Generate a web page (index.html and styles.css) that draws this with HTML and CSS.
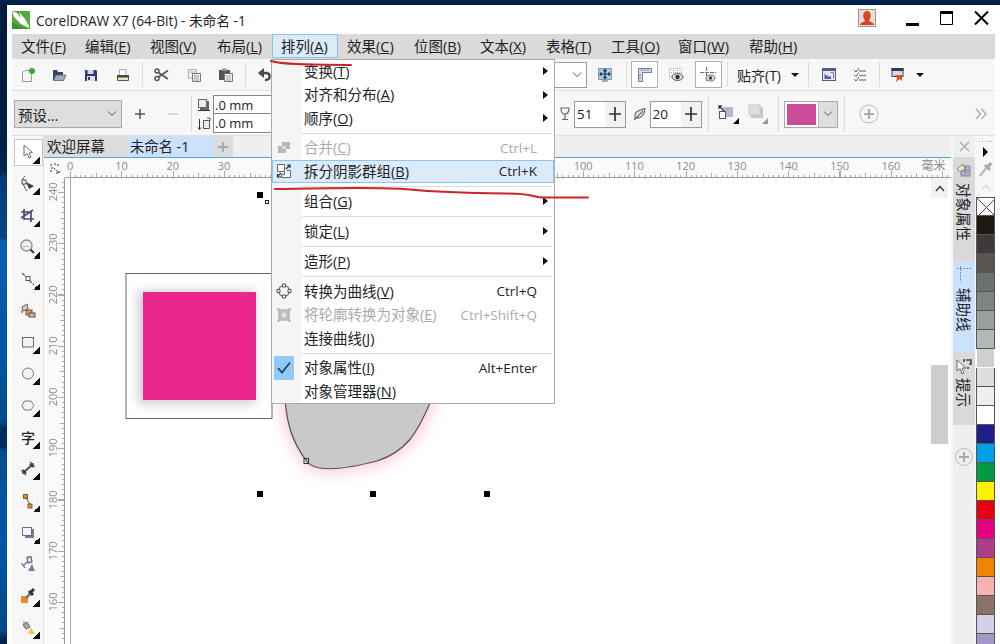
FILE: index.html
```html
<!DOCTYPE html>
<html lang="zh-CN">
<head>
<meta charset="utf-8">
<title>CorelDRAW X7</title>
<link rel="stylesheet" href="styles.css">
</head>
<body>
<div class="window">
  <header class="titlebar">
    <svg class="logo" width="18" height="18" viewBox="0 0 18 18"><rect width="18" height="18" fill="#58a83e"/><path d="M0 0L5 2 9 7 7 1 13 8 17 15 17 17 9 13 2 6Z" fill="#fff"/><path d="M0 11Q8 17 15 17L16 18H0Z" fill="#3f8d35"/></svg>
    <span class="title">CorelDRAW X7 (64-Bit) - 未命名 -1</span>
    <svg width="18" height="18" viewBox="0 0 18 18"><rect x=".5" y=".5" width="17" height="17" fill="#e6ddd8" stroke="#999"/><path d="M2 16C2 13 7 13 7 11.500C4 8 5 2 9 2S14 8 11 11.500C11 13 16 13 16 16Z" fill="#d6451b"/></svg>
    <svg class="min" width="14" height="14"><path d="M0 11.500H13" stroke="#000" stroke-width="3"/></svg>
    <svg class="max" width="14" height="14"><path d="M.5 1V13.500H12.500V1" stroke="#000" fill="none"/><path d="M0 1.500H13" stroke="#000" stroke-width="3"/></svg>
    <svg class="close" width="15" height="14"><path d="M1 .5L14 13.500M14 .5L1 13.500" stroke="#000" stroke-width="2"/></svg>
  </header>

  <nav class="menubar">
    <span>文件(<u>F</u>)</span><span>编辑(<u>E</u>)</span><span>视图(<u>V</u>)</span><span>布局(<u>L</u>)</span><span class="open">排列(<u>A</u>)</span><span>效果(<u>C</u>)</span><span>位图(<u>B</u>)</span><span>文本(<u>X</u>)</span><span>表格(<u>T</u>)</span><span>工具(<u>O</u>)</span><span>窗口(<u>W</u>)</span><span>帮助(<u>H</u>)</span>
  </nav>

  <div class="toolbar">
    <svg width="16" height="16"><path d="M2.500 14.500V5L5.500 3.500H11.500V14.500Z" fill="#f4f4f4" stroke="#999"/><circle cx="12" cy="4" r="3" fill="#3aa635"/></svg>
    <svg width="16" height="16"><path d="M2 3H6L7 5H12V8H5L3 13H2Z" fill="#3c4663"/><path d="M5 8H15L12.500 13.500H2.500Z" fill="#a5abb8" stroke="#444d66" stroke-width=".7"/></svg>
    <svg width="16" height="16"><path d="M2 3H13L14 4V14H2Z" fill="#34396f"/><rect x="4.500" y="3" width="6" height="4" fill="#cfd3e2"/><rect x="4" y="9" width="8" height="5" fill="#dfe1ea"/><path d="M6 10V13" stroke="#34396f" stroke-width="2"/></svg>
    <svg width="16" height="16"><path d="M4.500 8V2.500H11V8" fill="#fff" stroke="#aaa"/><path d="M2.500 8.500H13.500V13.500H2.500Z" fill="#e9e5bf" stroke="#555"/><path d="M2 9.500H14" stroke="#444" stroke-width="2"/></svg>
    <i class="sep"></i>
    <svg width="18" height="16"><circle cx="4" cy="4" r="2" fill="none" stroke="#555" stroke-width="1.400"/><circle cx="4" cy="11.500" r="2" fill="none" stroke="#555" stroke-width="1.400"/><path d="M5.500 5.500L15 12M5.500 10L15 3.500" stroke="#555" stroke-width="1.700"/></svg>
    <svg width="16" height="16"><path d="M2.500 2.500H10.500V11H2.500Z" fill="#f6f6f6" stroke="#aaa"/><path d="M6.500 6.500H14.500V14.500H6.500Z" fill="#eee" stroke="#777"/><path d="M4 5H9M8 9H13M8 11H13M8 13H13" stroke="#8290a5" stroke-width=".8"/></svg>
    <svg width="16" height="16"><path d="M1 3H12V13H1Z" fill="#57534f"/><path d="M4 1.500H9V4H4Z" fill="#999"/><path d="M6.500 6.500H14.500V14.500H6.500Z" fill="#eee" stroke="#777"/><path d="M8 9H13M8 11H13M8 13H13" stroke="#999" stroke-width=".8"/></svg>
    <i class="sep"></i>
    <svg width="18" height="16"><path d="M3 6H10C15 6 15 13 9 13" fill="none" stroke="#46484c" stroke-width="2.400"/><path d="M2 6L8 1V11Z" fill="#46484c"/></svg>
    <i></i>
    <div class="zoom-combo"><svg width="10" height="6"><path d="M1 .5L5 4.500 9 .5" fill="none" stroke="#555"/></svg></div>
    <svg width="16" height="16"><path d="M1.500 1.500H14.500V12.500H1.500Z" fill="#a9cce0" stroke="#8095a8"/><path d="M5 14H11" stroke="#8095a8" stroke-width="1.500"/><path d="M8 3V11M3.500 7H12.500M6.500 4L8 2.500 9.500 4M6.500 10L8 11.500 9.500 10M4.500 5.500L3 7 4.500 8.500M11.500 5.500L13 7 11.500 8.500" fill="none" stroke="#142f4c" stroke-width="1.200"/></svg>
    <i class="sep"></i>
    <div class="toggle"><svg width="16" height="16"><path d="M1.500 1.500H14.500V5.500H5.500V14.500H1.500Z" fill="#d7dbea" stroke="#747e9a"/><path d="M5 2V4M8 2V4M11 2V4M2 8H4M2 11H4" stroke="#747e9a"/></svg></div>
    <svg width="18" height="18"><path d="M2 2.500H15M2 6.500H15M2 10.500H8M2.500 2V14M6.500 2V14M10.500 2V7M14.500 2V7" stroke="#aaa" stroke-dasharray="1 1"/><ellipse cx="10.500" cy="11" rx="5.500" ry="3.500" fill="#ddd" stroke="#555"/><circle cx="10.500" cy="11" r="2.200" fill="#333"/></svg>
    <div class="toggle"><svg width="18" height="18"><path d="M7.500 1V16M1 6.500H17" stroke="#68708b" stroke-dasharray="4 1"/><ellipse cx="11.500" cy="12" rx="4.500" ry="3" fill="#ddd" stroke="#777"/><circle cx="11.500" cy="12" r="1.800" fill="#444"/></svg></div>
    <i class="sep"></i>
    <span class="snap">贴齐(T)</span>
    <b class="drop"></b>
    <i class="sep"></i>
    <svg width="16" height="16"><rect x="1.500" y="1.500" width="13" height="12" fill="#e5e7f3" stroke="#555a8b"/><path d="M1 3H15" stroke="#555a8b" stroke-width="2"/><path d="M3.500 6V12H10V9L8 10 6 8 5 9Z" fill="#555aa3"/><path d="M9.500 5.500H12.500V11.500" fill="none" stroke="#777cac"/></svg>
    <svg width="16" height="16"><path d="M7 4H14M7 8.500H14M7 13H14" stroke="#889488" stroke-width="1.300"/><path d="M2 3L4 5 7 1M2 7.500L4 9.500 7 5.500M2 12L4 14 7 10" fill="none" stroke="#4d6b4d"/></svg>
    <i class="sep"></i>
    <svg width="16" height="18"><rect x="2" y="2.500" width="11" height="8" fill="#d8dae5" stroke="#3e4462"/><path d="M1.500 3.500H13.500" stroke="#2f3554" stroke-width="3"/><path d="M5 9H12V15L9.500 13 6 16 7 12Z" fill="#df5027"/></svg>
    <b class="drop"></b>
  </div>

  <div class="propbar">
    <div class="preset"><span>预设...</span><svg width="10" height="6"><path d="M1 .5L5 4.500 9 .5" fill="none" stroke="#555"/></svg></div>
    <svg width="12" height="12"><path d="M6 1V11M1 6H11" stroke="#555" stroke-width="1.500"/></svg>
    <svg width="12" height="12"><path d="M1 6H11" stroke="#ccc" stroke-width="1.500"/></svg>
    <i class="sep tall"></i>
    <div class="offset-icons">
      <svg width="14" height="14"><rect x="3" y="3" width="9" height="9" fill="#666"/><rect x="1.500" y="1.500" width="8" height="8" fill="#e8eaf0" stroke="#666"/><path d="M1 12.500H13" stroke="#333"/></svg>
      <svg width="14" height="14"><path d="M2.500 2V12M1 10.500L2.500 12.500 4 10.500" fill="none" stroke="#333"/><path d="M6.500 3.500H12.500V11.500H6.500Z" fill="#eee" stroke="#555"/><path d="M10 1H13V4" stroke="#555" fill="none"/></svg>
    </div>
    <div class="offsets"><span>.0 mm</span><span>.0 mm</span></div>
    <i></i>
    <svg width="12" height="16"><path d="M2 2H10C10 6 9 8 6 8S2 6 2 2ZM6 8V13M3 13.500H9" fill="none" stroke="#666" stroke-width="1.200"/></svg>
    <div class="spin"><span>51</span><b><svg width="14" height="16"><path d="M7 1V15M1 8H13" stroke="#333" stroke-width="1.700"/></svg></b></div>
    <svg class="leaf" width="14" height="16"><path d="M2 12C1 5 7 4 12 2.500C12 8 8 13 3 12ZM1 14L10 5" fill="#eee" stroke="#666" stroke-width="1.100"/></svg>
    <div class="spin"><span>20</span><b><svg width="14" height="16"><path d="M7 1V15M1 8H13" stroke="#333" stroke-width="1.700"/></svg></b></div>
    <i class="sep tall"></i>
    <svg width="24" height="22"><rect x="7" y="4" width="10" height="10" fill="#b4b7d0"/><rect x="3.500" y="8.500" width="6" height="7" fill="#fff" stroke="#555"/><path d="M3 3L8 8M3 6V3H6" stroke="#333" fill="none" stroke-width="1.300"/><path d="M23 15V21H17Z"/></svg>
    <svg width="24" height="22"><rect x="5" y="4" width="12" height="11" fill="#c8c8c8"/><rect x="3" y="2" width="11" height="10" fill="#e0e0e0" stroke="#c8c8c8"/><path d="M22 15V21H16Z" fill="#999"/></svg>
    <i class="sep tall"></i>
    <div class="color-pick"><span></span><b><svg width="10" height="6"><path d="M1 .5L5 4.500 9 .5" fill="none" stroke="#555"/></svg></b></div>
    <i class="sep tall"></i>
    <svg width="20" height="20"><circle cx="10" cy="10" r="9" fill="none" stroke="#bbb"/><path d="M10 5V15M5 10H15" stroke="#aaa" stroke-width="2.200"/></svg>
    <svg class="more" width="12" height="12"><path d="M1 1L5.500 6 1 11M6.500 1L11 6 6.500 11" fill="none" stroke="#aaa" stroke-width="1.400"/></svg>
  </div>

  <main class="workspace">
    <aside class="toolbox">
      <div class="tool picked"><svg width="18" height="18"><path d="M5 2V13L8 10.500 10 15 12 14 10 10 13.500 9.500Z" fill="#fff" stroke="#666a7a"/></svg></div>
      <div class="tool"><svg width="18" height="18"><path d="M6 1C2 4 4 11 8 16" fill="none" stroke="#555"/><rect x="3" y="5" width="4" height="4" fill="#eee" stroke="#555"/><path d="M7 7L15 11 10 14Z" fill="#353b55"/></svg></div>
      <div class="tool"><svg width="18" height="18"><path d="M5 2V12H15M2 5H12V15M2 11L14 3" fill="none" stroke="#494b70" stroke-width="1.700"/></svg></div>
      <div class="tool"><svg width="18" height="18"><circle cx="7.500" cy="7.500" r="5.500" fill="#eef0f2" stroke="#888" stroke-width="1.300"/><path d="M4 8.500H11" stroke="#bbc"/><path d="M11.500 11.500L15 15" stroke="#444" stroke-width="2.400"/></svg></div>
      <div class="tool"><svg width="18" height="18"><path d="M3 3L15 15" stroke="#666" stroke-width="1.300" stroke-dasharray="4 1"/><rect x="7" y="6.500" width="4" height="4" fill="#fff" stroke="#555"/></svg></div>
      <div class="tool plain"><svg width="18" height="18"><path d="M3 5L8 2 9 7 4 9Z" fill="#d7cfc6" stroke="#675b55"/><rect x="7" y="8" width="6" height="5" fill="#e39a55" stroke="#555"/><rect x="10" y="11" width="6" height="4" fill="#e9b075" stroke="#555"/><path d="M3 8V11" stroke="#e08b22" stroke-width="2"/></svg></div>
      <div class="tool"><svg width="18" height="18"><rect x="3.500" y="4.500" width="11" height="9.500" fill="#f2f3f4" stroke="#66686f"/></svg></div>
      <div class="tool"><svg width="18" height="18"><circle cx="9" cy="8.500" r="5.500" fill="#f0f2f4" stroke="#777"/></svg></div>
      <div class="tool"><svg width="18" height="18"><path d="M5.500 4H12L15 8.500 12 13H5.500L3 8.500Z" fill="#f0f2f4" stroke="#777"/></svg></div>
      <div class="tool"><span class="glyph">字</span></div>
      <div class="tool"><svg width="18" height="18"><path d="M4 13L14 4" stroke="#444" stroke-width="1.700"/><path d="M2.500 10L7 15M11 2L15.500 7" stroke="#444" stroke-width="1.300"/><path d="M3 14L4.500 9 8 13ZM15 3L10 4.500 13.500 8Z" fill="#444"/></svg></div>
      <div class="tool"><svg width="18" height="18"><path d="M6 4L12 14" stroke="#555"/><rect x="4.500" y="2.500" width="4" height="4" fill="#dd8a2f" stroke="#855c32"/><rect x="9" y="12" width="4" height="4" fill="#dd8a2f" stroke="#855c32"/></svg></div>
      <div class="tool"><svg width="18" height="18"><path d="M6 5H15V14H6Z" fill="#777b92"/><path d="M3.500 3.500H12.500V11.500H3.500Z" fill="#f6f6fa" stroke="#666a80"/></svg></div>
      <div class="tool plain"><svg width="18" height="18"><path d="M8 2.500L12 1.500 13 7 9 8ZM8 7L4 11M2.500 8L6 13" fill="#e8e8ee" stroke="#666b82" stroke-width="1.300"/><path d="M9 16L13 9 16 16Z" fill="#777c98"/></svg></div>
      <div class="tool"><svg width="18" height="18"><rect x="2" y="9" width="7" height="7" fill="#ed8b20"/><path d="M7 11L13 5" stroke="#777" stroke-width="2.500"/><path d="M10 4L14 8M12 5L15 2" stroke="#333" stroke-width="3"/></svg></div>
      <div class="tool"><svg width="18" height="18"><path d="M4 6L8 3 11 8 7 10Z" fill="#aaa" stroke="#666"/><path d="M5 2V6" stroke="#777"/><path d="M9 15L12 9 16 15Z" fill="#f3c143"/></svg></div>
    </aside>

    <section class="document">
      <div class="tabs"><span class="tab">欢迎屏幕</span><span class="tab active">未命名 -1</span><span class="tab add"><svg width="12" height="12"><path d="M6 1V11M1 6H11" stroke="#aaa" stroke-width="2"/></svg></span></div>
      <div class="sheet">
        <div class="corner"><svg width="12" height="12"><path d="M1 3H4M6 1V4M8 3H11M3 5V8M5 6L10 11M7 11H10V8M1 9H3" stroke="#333" fill="none" stroke-dasharray="2 1"/></svg></div>
        <div class="hruler"><div class="hlabels"><span>0</span><span>10</span><span>20</span><span>30</span><i></i><span>100</span><span>110</span><span>120</span><span>130</span><span>140</span><span>150</span><span>160</span></div><span class="unit">毫米</span></div>
        <div class="vruler"><span>240</span><span>230</span><span>220</span><span>210</span><span>200</span><span>190</span><span>180</span><span>170</span><span>160</span></div>
        <div class="canvas">
          <svg class="art" width="866" height="466" viewBox="65 178 866 466">
            <defs>
              <filter id="soft" x="-20%" y="-20%" width="140%" height="140%"><feGaussianBlur stdDeviation="5.500"/></filter>
              <filter id="glow" x="-20%" y="-20%" width="140%" height="140%"><feGaussianBlur stdDeviation="7"/></filter>
            </defs>
            <path d="M70.500 178V644" stroke="#aaa"/>
            <rect x="126" y="273.500" width="146" height="145" fill="#fff" stroke="#666"/>
            <rect x="138" y="291" width="117" height="113" fill="#ccc" filter="url(#soft)"/>
            <rect x="143" y="292" width="113" height="108" fill="#ec268f"/>
            <path d="M285 390C285 425 296 444 306.500 461C314 472 342 470 377 461C407 451 417 433 430 403V380H285Z" fill="#f9cfe1" stroke="#f9cfe1" stroke-width="10" filter="url(#glow)"/>
            <path d="M284.500 380C284 425 294 444 306.500 461C314 472 342 470 377 461C407 451 417 433 430 403L434 380Z" fill="#c8c9c9" stroke="#5c4b52" stroke-width="1.200"/>
            <rect x="304" y="458.500" width="4.500" height="5" fill="none" stroke="#333"/>
            <path d="M257 192h6v6h-6zM257 491h6v6h-6zM370 491h6v6h-6zM484 491h6v6h-6z"/>
            <rect x="265.500" y="200.500" width="3" height="3" fill="#fff" stroke="#222"/>
          </svg>
          <div class="scroll"><div class="up"><svg width="10" height="7"><path d="M1 6L5 1.500 9 6" fill="none" stroke="#444" stroke-width="1.600"/></svg></div><div class="thumb"></div></div>
        </div>
      </div>
    </section>

    <aside class="docker">
      <div class="dock-close"><svg width="11" height="11"><path d="M1 1L10 10M10 1L1 10" stroke="#aaa" stroke-width="1.400"/></svg></div>
      <div class="dock d1"><svg width="18" height="18"><path d="M6 5H15V15H6Z" fill="#b3acd0" stroke="#8580a5"/><path d="M2 8L8 3 10 8 5 11Z" fill="#eee9ad" stroke="#888"/><path d="M6 10H15M10.500 5V15" stroke="#817aa8" stroke-dasharray="2 1"/></svg><span>对象属性</span></div>
      <div class="dock d2"><svg width="18" height="18"><path d="M2 3.500H17M5.500 1V17" stroke="#7894bd" stroke-dasharray="2 1"/></svg><span>辅助线</span></div>
      <div class="dock d3"><svg width="18" height="20"><path d="M2 4V15L5 12.500 7 18 9 17 7 12H11Z" fill="#fff" stroke="#666"/><path d="M11 4H16V8H14M13 11V13M9 3V6" fill="none" stroke="#444" stroke-width="1.600"/></svg><span>提示</span></div>
      <svg class="dock-add" width="20" height="20"><circle cx="10" cy="10" r="8.500" fill="none" stroke="#bbb"/><path d="M10 5V15M5 10H15" stroke="#aaa" stroke-width="2"/></svg>
    </aside>

    <aside class="palette">
      <svg width="19" height="61"><path d="M3 5.500H16" stroke="#aaa" stroke-dasharray="1 2"/><path d="M7 11L12 16 7 21Z"/><path d="M4 40L11 31" stroke="#bbb" stroke-width="2.500"/><path d="M9 29L14 34M12 31L15 27" stroke="#aaa" stroke-width="3"/><path d="M6 54L10 49 14 54" fill="none" stroke="#ccc"/></svg>
      <svg class="none" width="19" height="19"><path d="M0 0L19 19M19 0L0 19" stroke="#444"/></svg>
      <i class="k100"></i><i class="k90"></i><i class="k80"></i><i class="k70"></i><i class="k60"></i><i class="k50"></i><i class="k40"></i><i class="k30 pale"></i><i class="k20"></i><i class="k10"></i><i class="white"></i><i class="navy"></i><i class="cyan"></i><i class="green"></i><i class="yellow"></i><i class="red"></i><i class="magenta"></i><i class="purple"></i><i class="orange"></i><i class="pink"></i><i class="brown"></i><i class="lilac"></i><i class="violet"></i>
    </aside>
  </main>
</div>

<div class="dropdown">
  <div class="item"><span>变换(<u>T</u>)</span><b></b></div>
  <div class="item"><span>对齐和分布(<u>A</u>)</span><b></b></div>
  <div class="item"><span>顺序(<u>O</u>)</span><b></b></div>
  <hr>
  <div class="item off"><svg width="16" height="16"><path d="M6 2H14V9H10V13H2V6H6Z" fill="#b8b8b8"/><path d="M6 6H10V9H6Z" fill="#ddd"/></svg><span>合并(<u>C</u>)</span><kbd>Ctrl+L</kbd></div>
  <div class="item hot"><svg width="16" height="16"><path d="M1.500 1.500H8.500V8.500H1.500Z" fill="#f8fafc" stroke="#666"/><path d="M11 7.500H14.500V14.500H5.500V11.500H8.500V8.500" fill="#f8fafc" stroke="#666"/><path d="M10 6L14 2M11 2H14V5M5 10L1.500 13.500M1.500 11V14H5" fill="none" stroke="#333" stroke-width="1.200"/></svg><span>拆分阴影群组(<u>B</u>)</span><kbd>Ctrl+K</kbd></div>
  <hr>
  <div class="item"><span>组合(<u>G</u>)</span><b></b></div>
  <hr>
  <div class="item"><span>锁定(<u>L</u>)</span><b></b></div>
  <hr>
  <div class="item"><span>造形(<u>P</u>)</span><b></b></div>
  <hr>
  <div class="item"><svg width="16" height="16"><circle cx="8" cy="8" r="5.500" fill="none" stroke="#666" stroke-width="1.200"/><path d="M6.500 1H9.500V4H6.500ZM6.500 12H9.500V15H6.500ZM1 6.500H4V9.500H1ZM12 6.500H15V9.500H12Z" fill="#fff" stroke="#555"/></svg><span>转换为曲线(<u>V</u>)</span><kbd>Ctrl+Q</kbd></div>
  <div class="item off"><svg width="16" height="16"><path d="M1.500 1.500L4 3H12L14.500 1.500 13 4V12L14.500 14.500 12 13H4L1.500 14.500 3 12V4Z" fill="#ccc" stroke="#b5b5b5" stroke-width="1.500"/><rect x="5" y="5" width="6" height="6" fill="#e2e2e2" stroke="#aaa"/></svg><span>将轮廓转换为对象(<u>E</u>)</span><kbd>Ctrl+Shift+Q</kbd></div>
  <div class="item"><span>连接曲线(<u>J</u>)</span></div>
  <hr>
  <div class="item checked"><svg width="20" height="24"><rect width="20" height="24" fill="#91c9f7"/><path d="M4 12L8 16.500 16 6.500" fill="none" stroke="#164a78" stroke-width="1.800"/></svg><span>对象属性(<u>I</u>)</span><kbd>Alt+Enter</kbd></div>
  <div class="item"><span>对象管理器(<u>N</u>)</span></div>
</div>

<svg class="marks" width="1000" height="210"><path d="M271 61C285 66 325 64 351 65M275 189C310 188.500 380 186.500 410 189.500S470 193 505 193.500S530 197.500 545 197.500H588" fill="none" stroke="#cb2529" stroke-width="2" stroke-linecap="round"/></svg>
</body>
</html>
```
FILE: styles.css
```css
* { box-sizing: border-box; }
body {
  margin: 0;
  width: 1000px;
  height: 644px;
  overflow: hidden;
  position: relative;
  padding: 5px 0 0 7px;
  background: linear-gradient(#02204a 0 5px, #031d42 5px 120px, #04264f 172px, #063d78 178px, #064686 238px, #0661b0 241px, #0457a2 350px, #004b91 422px, #032d5d 428px 447px, #064f96 451px, #0057a5 540px, #04498b 630px, #02254e 640px);
  font-family: "Open Sans", "Noto Sans CJK SC", sans-serif;
  font-size: 14.5px;
  color: #222;
}
svg { display: block; flex: none; }
u { text-underline-offset: 1px; text-decoration-thickness: 1px; }
.window {
  width: 993px;
  height: 639px;
  background: #fff;
  padding: 0 5px;
  display: flex;
  flex-direction: column;
}

/* title bar */
.titlebar { height: 29px; display: flex; align-items: center; padding: 0 6px 3px 0; flex: none; }
.title { font-size: 13.7px; margin-left: 6px; flex: 1; white-space: nowrap; padding-top: 3px; }
.logo { margin-top: 4px; }
.min { margin-left: 30px; margin-top: 4px; }
.max { margin-left: 20px; }
.close { margin-left: 20px; }

/* menu bar */
.menubar {
  height: 25px;
  flex: none;
  background: #dadada;
  display: grid;
  grid-template-columns: 64px 65px 67px 64px 66px 67px 66px 66px 65px 67px 71px 1fr;
  line-height: 25px;
  white-space: nowrap;
}
.menubar span { padding-left: 9px; }
.menubar .open { background: #d9ebf9; box-shadow: inset 0 0 0 1px #8fc3ea; height: 24px; }

/* toolbars */
.toolbar, .propbar {
  flex: none;
  background: #f7f7f7;
  border-bottom: 1px solid #e0e0e0;
  display: grid;
  align-items: center;
  justify-items: center;
}
.toolbar {
  height: 32px;
  grid-template-columns: 31px 32px 32px 32px 7px 32px 32px 32px 7px 32px 259px 47px 36px 6px 31px 32px 32px 6px 57px 16px 10px 31px 32px 6px 32px 12px;
}
.propbar {
  height: 45px;
  padding-top: 2px;
  grid-template-columns: 110px 36px 30px 7px 18px 68px 274px 19px 52px 23px 53px 13px 26px 33px 8px 58px 9px 40px 106px;
}
.sep { width: 1px; height: 25px; background: #dcdcdc; }
.sep.tall { height: 36px; }
.zoom-combo { width: 47px; height: 26px; border: 1px solid #999; background: #fff; display: flex; align-items: center; justify-content: flex-end; padding-right: 4px; }
.toggle { width: 27px; height: 27px; border: 1px solid #b0b0b0; background: #fff; display: grid; place-items: center; }
.snap { justify-self: start; padding-left: 7px; font-size: 14px; white-space: nowrap; }
.drop { border: 4px solid transparent; border-top: 4px solid #111; border-bottom: 0; }
.preset { justify-self: end; width: 108px; height: 28px; border: 1px solid #aaa; background: #dedede; display: flex; align-items: center; justify-content: space-between; padding: 0 4px 0 3px; }
.offset-icons { display: grid; gap: 5px; }
.offsets { width: 68px; display: grid; font-size: 13px; }
.offsets span { height: 19px; line-height: 18px; border: 1px solid #888; background: #fff; padding-left: 1px; }
.offsets span + span { border-top: 0; }
.spin { width: 52px; height: 27px; border: 1px solid #999; background: #fff; display: flex; align-items: center; font-size: 13.5px; padding-left: 2px; }
.spin span { flex: 1; }
.spin b { width: 20px; height: 25px; background: #f2f2f2; display: grid; place-items: center; }
.leaf { justify-self: end; margin-right: 2px; }
.color-pick { width: 54px; height: 27px; border: 1px solid #aaa; background: #fff; display: flex; }
.color-pick span { flex: 1; margin: 2px; background: #cb4a99; }
.color-pick b { width: 19px; background: #dedede; border-left: 1px solid #bbb; display: grid; place-items: center; }
.more { justify-self: end; margin-right: 8px; }

/* workspace */
.workspace { flex: 1; min-height: 0; display: grid; grid-template-columns: 32px 907px 2px 22px 1px 19px; background: #f7f7f7; }
.toolbox { padding-top: .5px; overflow: hidden; border-right: 1px solid #e0e0e0; }
.tool { height: 31.700px; width: 29px; margin-left: 2px; display: flex; align-items: center; padding-left: 5px; background: linear-gradient(135deg, transparent 50%, #111 50%) 19px 20px / 7px 7px no-repeat; }
.tool.plain { background: none; }
.tool.picked { background-color: #fff; box-shadow: inset 0 0 0 1px #c4c4c4; height: 27.700px; margin-top: 2px; margin-bottom: 2px; background-position: 19px 18px; }
.glyph { font-size: 14px; font-weight: 500; padding-left: 2px; line-height: 1; }

.document { display: flex; flex-direction: column; min-width: 0; overflow: hidden; }
.tabs { height: 22px; flex: none; border-bottom: 1px solid #49a9db; background: #efefef; display: flex; line-height: 21px; white-space: nowrap; }
.tab { width: 84px; background: #dcdcdc; padding-left: 3px; color: #222; }
.tab.active { width: 85px; background: #cce1fb; padding-left: 2px; font-size: 14.3px; }
.tab.add { width: 20px; padding: 0; display: grid; place-items: center; }

.sheet { flex: 1; min-height: 0; display: grid; grid-template: 20px 1fr / 21px 1fr; }
.corner { display: grid; place-items: center; background: #fafafa; }
.hruler {
  position: relative;
  display: flex;
  overflow: hidden;
  border-bottom: 1px solid #999;
  color: #8b8b8b;
  font-size: 11px;
  background:
    repeating-linear-gradient(90deg, #aaa 0 1px, transparent 1px 51.300px) 5px 100% / 100% 6px no-repeat,
    repeating-linear-gradient(90deg, #aaa 0 1px, transparent 1px 25.650px) 5px 100% / 100% 4px no-repeat,
    repeating-linear-gradient(90deg, #aaa 0 1px, transparent 1px 5.130px) 5px 100% / 100% 2px no-repeat,
    #fafafa;
}
.hlabels { display: flex; margin-left: -20.500px; line-height: 16px; }
.hlabels span { width: 51.300px; text-align: center; flex: none; }
.hlabels i { width: 307.800px; flex: none; }
.unit { font-size: 12px; line-height: 16px; margin-left: 5px; white-space: nowrap; }
.vruler {
  overflow: hidden;
  border-right: 1px solid #999;
  color: #8b8b8b;
  font-size: 11px;
  padding-right: 3px;
  background:
    repeating-linear-gradient(#aaa 0 1px, transparent 1px 51.250px) 100% 14px / 6px 100% no-repeat,
    repeating-linear-gradient(#aaa 0 1px, transparent 1px 25.620px) 100% 14px / 4px 100% no-repeat,
    repeating-linear-gradient(#aaa 0 1px, transparent 1px 5.125px) 100% -1.500px / 2px 100% no-repeat,
    #fafafa;
}
.vruler span { display: block; writing-mode: vertical-rl; transform: rotate(180deg); height: 51.250px; width: 17px; line-height: 17px; text-align: center; }
.vruler span:first-child { margin-top: -12px; }
.canvas { background: #fff; display: flex; min-width: 0; overflow: hidden; }
.scroll { width: 20px; }
.up { width: 17px; height: 20px; background: #f2f2f2; display: grid; place-items: center; }
.thumb { width: 17px; height: 79px; margin-top: 167px; background: #cdcdcd; }

/* docker tabs */
.docker { grid-column: 4; background: #efefef; display: flex; flex-direction: column; align-items: center; }
.dock-close { height: 21px; display: grid; place-items: center; }
.dock { width: 22px; display: flex; flex-direction: column; align-items: center; padding-top: 4px; background: #dadada; }
.dock span { writing-mode: vertical-rl; text-orientation: sideways; line-height: 20px; font-size: 14.500px; margin-right: 2px; }
.d1 { height: 104px; }
.d1 span { margin-top: 4px; }
.d2 { height: 91px; background: #cce1ff; }
.d2 span { margin-top: 5px; }
.d3 { height: 73px; }
.d3 span { margin-top: 2px; }
.dock-add { margin-top: 22px; }

/* colour palette */
.palette { grid-column: 6; overflow: hidden; background: #f7f7f7; }
.palette i, .none { display: block; height: 19px; border: 1px solid #555; border-top-width: 0; }
.none { background: #fff; border-top-width: 1px; }
.palette .pale { border-color: #fff; }
.k100 { background: #1f1811; } .k90 { background: #3e3a39; } .k80 { background: #595553; }
.k70 { background: #6a716e; } .k60 { background: #7d8481; } .k50 { background: #9a9f9c; }
.k40 { background: #b4b8b5; } .k30 { background: #cdd0ce; } .k20 { background: #dddddd; }
.k10 { background: #efefef; } .white { background: #fff; } .navy { background: #1d2088; }
.cyan { background: #00a0e9; } .green { background: #009944; } .yellow { background: #fff100; }
.red { background: #e60012; } .magenta { background: #e4007f; } .purple { background: #ae3c87; }
.orange { background: #f08300; } .pink { background: #f6b1b3; } .brown { background: #88726a; }
.lilac { background: #d4cfe7; } .violet { background: #a398c8; }

/* open menu, above the workspace */
.dropdown {
  position: absolute;
  left: 271px;
  top: 59px;
  width: 284px;
  height: 345px;
  border: 1px solid #aaa;
  background: linear-gradient(90deg, #f5f5f5 30px, #fff 30px);
}
.item { height: 23.500px; display: flex; align-items: center; position: relative; top: -.7px; padding: 0 17px 0 32px; white-space: nowrap; line-height: 23px; }
.item svg { margin: 0 12px 0 -28px; }
.item.checked svg { margin: 0 10px 0 -30px; }
.item span { flex: 1; }
.item b { margin-right: -11px; border: 4px solid transparent; border-left: 5px solid #111; border-right: 0; }
.item kbd { font: 13.5px "Open Sans", sans-serif; }
.item.off { color: #aaa; }
.item.hot { background: #dcebf9; box-shadow: inset 0 0 0 1px #8fc3ea; }
.dropdown hr { margin: 2.400px 2px 3px 30px; border: 0; height: 1px; background: #dcdcdc; }
.marks { position: absolute; left: 0; top: 0; pointer-events: none; }
```
